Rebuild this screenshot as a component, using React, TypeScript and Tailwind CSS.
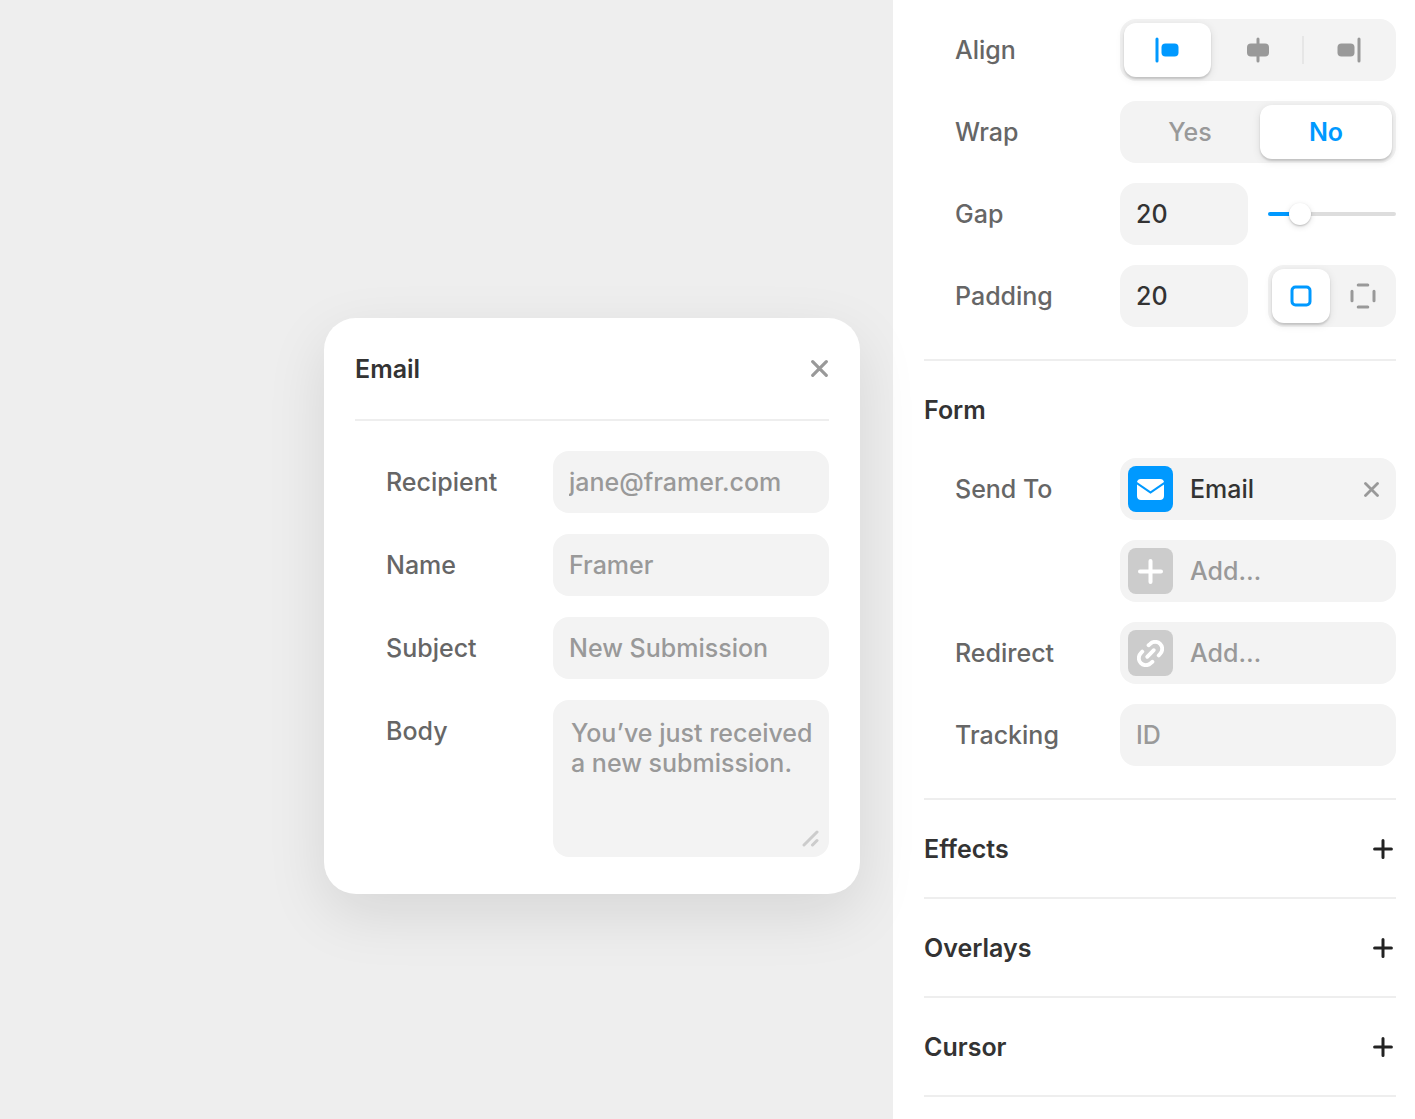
import React, { useState } from 'react';

type Align = 'start' | 'center' | 'end';

const CloseIcon = ({ size = 16 }: { size?: number }) => (
  <svg width={size} height={size} viewBox="0 0 16 16" fill="none" stroke="currentColor" strokeWidth="3" strokeLinecap="round">
    <path d="M1.6 1.6 14.4 14.4M14.4 1.6 1.6 14.4" />
  </svg>
);

const PlusIcon = () => (
  <svg width="20" height="20" viewBox="0 0 20 20" fill="none" stroke="currentColor" strokeWidth="3" strokeLinecap="round">
    <path d="M10 1.6v16.8M1.6 10h16.8" />
  </svg>
);

const AlignStartIcon = () => (
  <svg width="24" height="26" viewBox="0 0 24 26" fill="currentColor">
    <rect x="0.5" y="0.5" width="3" height="25" rx="1.5" />
    <rect x="6.5" y="6.5" width="17" height="13" rx="4" />
  </svg>
);

const AlignCenterIcon = () => (
  <svg width="24" height="26" viewBox="0 0 24 26" fill="currentColor">
    <rect x="10.5" y="0.5" width="3" height="25" rx="1.5" />
    <rect x="1" y="6.5" width="22" height="13" rx="4" />
  </svg>
);

const AlignEndIcon = () => (
  <svg width="24" height="26" viewBox="0 0 24 26" fill="currentColor">
    <rect x="20.5" y="0.5" width="3" height="25" rx="1.5" />
    <rect x="0.5" y="6.5" width="17" height="13" rx="4" />
  </svg>
);

const SidesAllIcon = () => (
  <svg width="22" height="22" viewBox="0 0 22 22" fill="none" stroke="currentColor" strokeWidth="3">
    <rect x="2" y="2" width="18" height="18" rx="3.5" />
  </svg>
);

const SidesEachIcon = () => (
  <svg width="26" height="26" viewBox="0 0 26 26" fill="none" stroke="currentColor" strokeWidth="3" strokeLinecap="round">
    <path d="M8.2 2h9.6M8.2 24h9.6M2 8.2v9.6M24 8.2v9.6" />
  </svg>
);

const MailIcon = () => (
  <svg width="27" height="21" viewBox="0 0 27 21" fill="currentColor">
    <path d="M0 3C.4 1.200 1.800 0 3.600 0h19.800c1.800 0 3.200 1.200 3.600 3L13.500 12.200z" />
    <path d="M0 5.500 13.500 14.700 27 5.500V17c0 2.400-1.600 4-4 4H4c-2.400 0-4-1.600-4-4z" />
  </svg>
);

const AddIcon = () => (
  <svg width="25" height="25" viewBox="0 0 25 25" fill="none" stroke="currentColor" strokeWidth="4" strokeLinecap="round">
    <path d="M12.500 2v21M2 12.500h21" />
  </svg>
);

const LinkIcon = () => (
  <svg width="27" height="27" viewBox="0 0 28 28" fill="none" stroke="currentColor" strokeWidth="4" strokeLinecap="round">
    <path d="M12 5.500 13.700 4a7.200 7.200 0 0 1 10.300 10.300L22.500 16" />
    <path d="M5.500 12 4 13.700A7.200 7.200 0 0 0 14.300 24L16 22.500" />
    <path d="M10.600 17.400l6.800-6.800" />
  </svg>
);

const GripIcon = () => (
  <svg width="17" height="17" viewBox="0 0 17 17" fill="none" stroke="currentColor" strokeWidth="3" strokeLinecap="round">
    <path d="M2 15 15 2M10.500 15 15 10.500" />
  </svg>
);

const fieldClass =
  'rounded-2xl bg-[#f3f3f3] px-4 text-[#333] placeholder-[#999] focus:outline-none';

function Row({ label, htmlFor, children }: { label: string; htmlFor?: string; children: React.ReactNode }) {
  return (
    <div className="flex items-start pl-[31px]">
      {htmlFor ? (
        <label htmlFor={htmlFor} className="flex h-[62px] flex-1 items-center text-[#666]">{label}</label>
      ) : (
        <span className="flex h-[62px] flex-1 items-center text-[#666]">{label}</span>
      )}
      <div className="flex w-[276px] shrink-0 gap-5">{children}</div>
    </div>
  );
}

function Segment({ active, label, onClick, children }: { active: boolean; label: string; onClick: () => void; children: React.ReactNode }) {
  return (
    <button
      type="button"
      aria-label={label}
      aria-pressed={active}
      onClick={onClick}
      className={`flex h-[54px] flex-1 items-center justify-center rounded-xl ${
        active
          ? 'bg-white text-[#09f] shadow-[0_2px_2px_rgba(0,0,0,0.14),0_2px_8px_rgba(0,0,0,0.1)]'
          : 'text-[#999]'
      }`}
    >
      {children}
    </button>
  );
}

function Action({ icon, children }: { icon: React.ReactNode; children: React.ReactNode }) {
  return (
    <button type="button" className="flex h-[62px] w-full items-center gap-[17px] rounded-2xl bg-[#f3f3f3] px-2 text-[#999]">
      <span className="flex h-[46px] w-[45px] items-center justify-center rounded-lg bg-[#ccc] text-white">{icon}</span>
      {children}
    </button>
  );
}

function EmailCard() {
  return (
    <section className="w-[536px] rounded-[32px] bg-white px-[31px] pb-[37px] shadow-[0_20px_60px_rgba(0,0,0,0.1)]">
      <header className="flex h-[103px] items-center justify-between border-b-2 border-[#eee]">
        <h2 className="font-semibold text-[#333]">Email</h2>
        <button type="button" aria-label="Close" className="pr-px text-[#999]">
          <CloseIcon size={17} />
        </button>
      </header>
      <div className="flex flex-col gap-[21px] pt-[30px]">
        <Row label="Recipient" htmlFor="recipient">
          <input id="recipient" type="email" placeholder="jane@framer.com" className={`h-[62px] w-full ${fieldClass}`} />
        </Row>
        <Row label="Name" htmlFor="name">
          <input id="name" placeholder="Framer" className={`h-[62px] w-full ${fieldClass}`} />
        </Row>
        <Row label="Subject" htmlFor="subject">
          <input id="subject" placeholder="New Submission" className={`h-[62px] w-full ${fieldClass}`} />
        </Row>
        <Row label="Body" htmlFor="body">
          <div className="relative w-full">
            <textarea
              id="body"
              placeholder="You’ve just received a new submission."
              className="block h-[157px] w-full resize-none rounded-2xl bg-[#f3f3f3] py-[18px] pr-3 pl-[18px] text-[#333] placeholder-[#999] focus:outline-none"
            />
            <span className="pointer-events-none absolute right-2.5 bottom-2.5 text-[#ccc]">
              <GripIcon />
            </span>
          </div>
        </Row>
      </div>
    </section>
  );
}

export default function App() {
  const [align, setAlign] = useState<Align>('start');
  const [wrap, setWrap] = useState(false);
  const [gap, setGap] = useState(20);
  const [padding, setPadding] = useState('20');
  const [perSide, setPerSide] = useState(false);

  return (
    <div className="flex min-h-screen bg-white font-['Inter',sans-serif] text-[25px] leading-[30px] font-medium">
      <main className="relative z-10 flex flex-1 items-start justify-end">
        <div className="absolute inset-0 -z-10 bg-[#eee]" />
        <div className="pt-[318px] pr-[33px]">
          <EmailCard />
        </div>
      </main>

      <aside className="w-[522px] shrink-0 pr-[19px] pl-[31px]">
        <section className="flex flex-col gap-5 border-b-2 border-[#eee] pt-[19px] pb-8">
          <Row label="Align">
            <div className="flex w-full rounded-2xl bg-[#f3f3f3] p-1">
              <Segment label="Align start" active={align === 'start'} onClick={() => setAlign('start')}>
                <AlignStartIcon />
              </Segment>
              <span className="w-1" />
              <Segment label="Align center" active={align === 'center'} onClick={() => setAlign('center')}>
                <AlignCenterIcon />
              </Segment>
              <span className="flex w-1 items-center justify-center">
                <span className="h-7 w-0.5 bg-[#e6e6e6]" />
              </span>
              <Segment label="Align end" active={align === 'end'} onClick={() => setAlign('end')}>
                <AlignEndIcon />
              </Segment>
            </div>
          </Row>
          <Row label="Wrap">
            <div className="flex w-full gap-1 rounded-2xl bg-[#f3f3f3] p-1">
              <Segment label="Yes" active={wrap} onClick={() => setWrap(true)}>Yes</Segment>
              <Segment label="No" active={!wrap} onClick={() => setWrap(false)}>
                <span className="font-semibold">No</span>
              </Segment>
            </div>
          </Row>
          <Row label="Gap" htmlFor="gap">
            <input
              id="gap"
              value={gap}
              onChange={(e) => setGap(Number(e.target.value) || 0)}
              className={`h-[62px] w-32 ${fieldClass}`}
            />
            <input
              type="range"
              aria-label="Gap"
              min={0}
              max={100}
              value={gap}
              onChange={(e) => setGap(Number(e.target.value))}
              style={{ backgroundImage: `linear-gradient(to right, #0099ff ${gap}%, #dddddd ${gap}%)` }}
              className="h-1 w-32 appearance-none self-center rounded-full [&::-webkit-slider-thumb]:h-[22px] [&::-webkit-slider-thumb]:w-[22px] [&::-webkit-slider-thumb]:appearance-none [&::-webkit-slider-thumb]:rounded-full [&::-webkit-slider-thumb]:bg-white [&::-webkit-slider-thumb]:shadow-[0_1px_2px_rgba(0,0,0,0.2),0_2px_6px_rgba(0,0,0,0.12)]"
            />
          </Row>
          <Row label="Padding" htmlFor="padding">
            <input
              id="padding"
              value={padding}
              onChange={(e) => setPadding(e.target.value)}
              className={`h-[62px] w-32 ${fieldClass}`}
            />
            <div className="flex w-32 gap-1 rounded-2xl bg-[#f3f3f3] p-1">
              <Segment label="All sides" active={!perSide} onClick={() => setPerSide(false)}>
                <SidesAllIcon />
              </Segment>
              <Segment label="Each side" active={perSide} onClick={() => setPerSide(true)}>
                <SidesEachIcon />
              </Segment>
            </div>
          </Row>
        </section>

        <section className="border-b-2 border-[#eee] pb-8">
          <h2 className="flex h-[97px] items-center font-semibold text-[#333]">Form</h2>
          <div className="flex flex-col gap-5">
            <Row label="Send To">
              <div className="flex w-full flex-col gap-5">
                <div className="flex h-[62px] items-center justify-between rounded-2xl bg-[#f3f3f3] pr-[17px] pl-2">
                  <button type="button" className="flex items-center gap-[17px] text-[#333]">
                    <span className="flex h-[46px] w-[45px] items-center justify-center rounded-lg bg-[#09f] text-white">
                      <MailIcon />
                    </span>
                    Email
                  </button>
                  <button type="button" aria-label="Remove email" className="text-[#999]">
                    <CloseIcon size={15} />
                  </button>
                </div>
                <Action icon={<AddIcon />}>Add…</Action>
              </div>
            </Row>
            <Row label="Redirect">
              <Action icon={<LinkIcon />}>Add…</Action>
            </Row>
            <Row label="Tracking" htmlFor="tracking">
              <input id="tracking" placeholder="ID" className={`h-[62px] w-full ${fieldClass}`} />
            </Row>
          </div>
        </section>

        {['Effects', 'Overlays', 'Cursor'].map((title) => (
          <section key={title} className="flex h-[99px] items-center justify-between border-b-2 border-[#eee] pr-[3px]">
            <h2 className="font-semibold text-[#333]">{title}</h2>
            <button type="button" aria-label={`Add ${title}`} className="text-[#222]">
              <PlusIcon />
            </button>
          </section>
        ))}
      </aside>
    </div>
  );
}
